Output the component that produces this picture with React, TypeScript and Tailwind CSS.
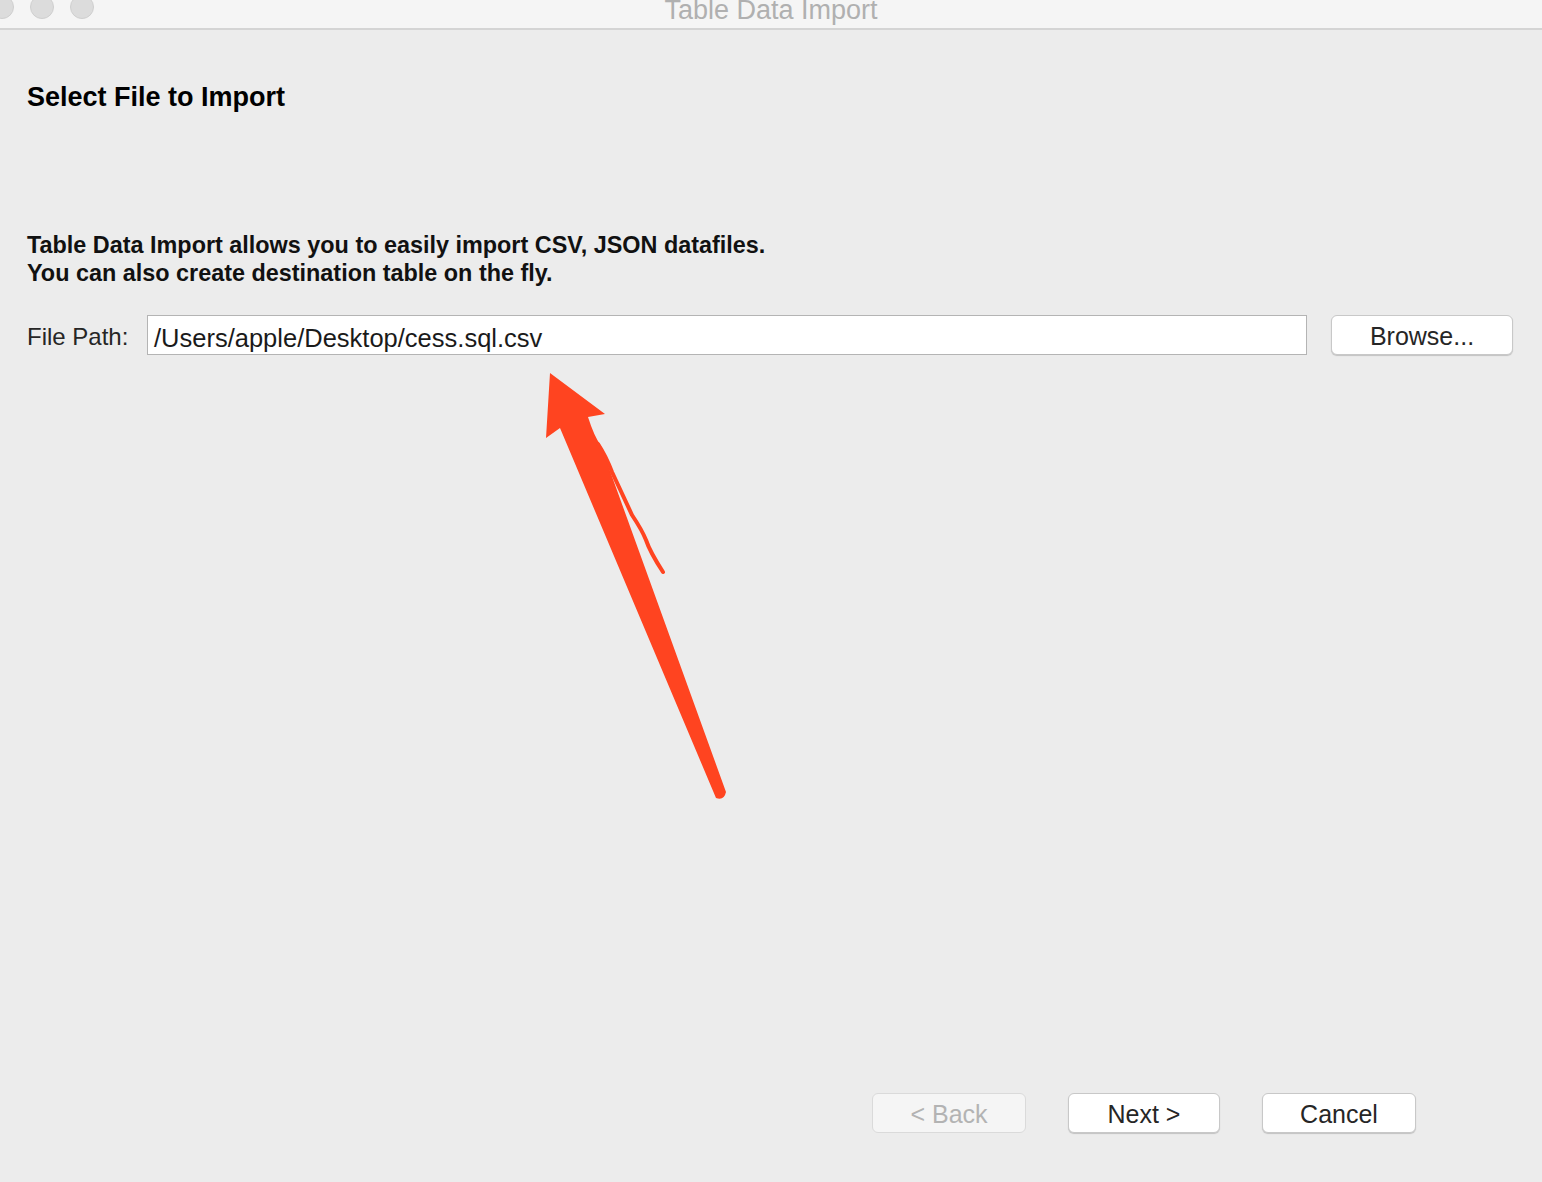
import React from "react";

const sans = { fontFamily: '"Liberation Sans", Arial, sans-serif' };

function Arrow() {
  // red annotation arrow drawn over the dialog
  return (
    <svg
      className="absolute left-0 top-0 pointer-events-none"
      width="1542"
      height="1182"
      viewBox="0 0 1542 1182"
    >
      <path
        d="M550 373 L554 376 L605 414 L588 417 Q594 436 601 446 L726 792 Q724 801 716 798 L560 428 L546 438 Z"
        fill="#ff4420"
      />
      <path
        d="M598 444 Q606 456 612 472 L632 515 Q642 530 646 540 Q650 552 663 572"
        stroke="#ff4420"
        strokeWidth="4"
        strokeLinecap="round"
        fill="none"
      />
    </svg>
  );
}

function MacButton({ label, width, disabled }: { label: string; width: string; disabled?: boolean }) {
  return (
    <button
      className={
        "h-[40px] rounded-[6px] border text-[25px] leading-none pt-[2px] " +
        width +
        (disabled
          ? " bg-[#f5f5f5] border-[#dadada] text-[#b3b3b3]"
          : " bg-white border-[#c8c8c8] text-[#262626] shadow-[0_1px_1px_rgba(0,0,0,0.18)]")
      }
      style={sans}
    >
      {label}
    </button>
  );
}

export default function App() {
  return (
    <div className="relative w-[1542px] h-[1182px] overflow-hidden bg-[#ececec] flex flex-col" style={sans}>
      {/* title bar */}
      <div className="relative h-[30px] shrink-0 bg-[#f5f5f5] border-b-2 border-[#d4d4d4]">
        <div className="absolute left-[-10px] top-[-5px] flex gap-[16px]">
          <div className="w-[24px] h-[24px] rounded-full bg-[#dcdcdc] border border-[#cfcfcf]" />
          <div className="w-[24px] h-[24px] rounded-full bg-[#dcdcdc] border border-[#cfcfcf]" />
          <div className="w-[24px] h-[24px] rounded-full bg-[#dcdcdc] border border-[#cfcfcf]" />
        </div>
        <div className="absolute left-0 right-0 top-[-5px] text-center text-[27px] leading-[30px] text-[#b0b0b0]">
          Table Data Import
        </div>
      </div>

      {/* body */}
      <div className="flex-1 flex flex-col px-[27px]">
        <h1 className="mt-[52px] text-[27px] font-bold text-black leading-[30px]">Select File to Import</h1>

        <div className="mt-[119px] text-[23.4px] font-bold text-[#111] leading-[28px]">
          <p>Table Data Import allows you to easily import CSV, JSON datafiles.</p>
          <p>You can also create destination table on the fly.</p>
        </div>

        <div className="mt-[28px] flex items-center">
          <span className="text-[24px] text-[#262626] w-[120px] pt-[4px]">File Path:</span>
          <div className="w-[1160px] h-[40px] bg-white border border-[#b4b4b4] flex items-center pl-[6px] pt-[6px] text-[25.5px] text-[#1a1a1a]">
            /Users/apple/Desktop/cess.sql.csv
          </div>
          <div className="ml-[24px]">
            <MacButton label="Browse..." width="w-[182px]" />
          </div>
        </div>

        <div className="flex-1" />

        <div className="flex justify-end gap-[42px] pr-[99px] mb-[49px]">
          <MacButton label="< Back" width="w-[154px]" disabled />
          <MacButton label="Next >" width="w-[152px]" />
          <MacButton label="Cancel" width="w-[154px]" />
        </div>
      </div>

      <Arrow />
    </div>
  );
}
